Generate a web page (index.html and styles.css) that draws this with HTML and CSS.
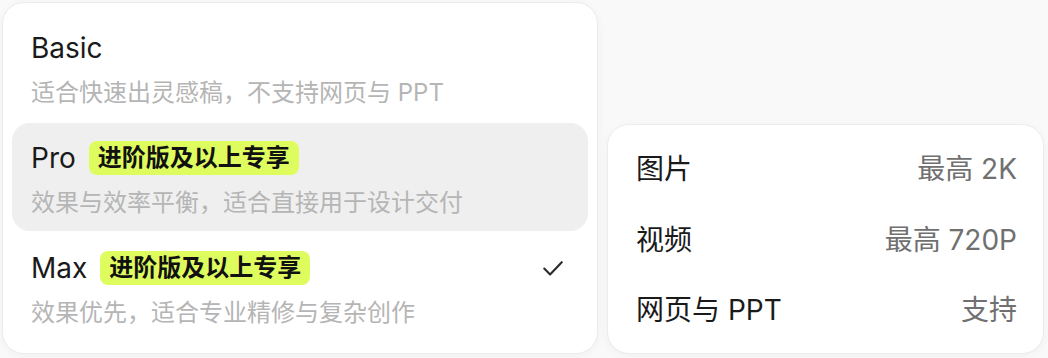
FILE: index.html
```html
<!DOCTYPE html>
<html lang="zh-CN">
<head>
    <meta charset="UTF-8">
    <meta name="viewport" content="width=device-width, initial-scale=1.0">
    <title>模式选择</title>
    <link rel="stylesheet" href="styles.css">
</head>
<body>
    <div class="stage">
        <div class="mode-menu">
            <div class="mode-item">
                <div class="mode-head">
                    <span class="mode-name">Basic</span>
                </div>
                <div class="mode-desc">适合快速出灵感稿，不支持网页与 PPT</div>
            </div>
            <div class="mode-item hovered">
                <div class="mode-head">
                    <span class="mode-name">Pro</span>
                    <span class="badge">进阶版及以上专享</span>
                </div>
                <div class="mode-desc">效果与效率平衡，适合直接用于设计交付</div>
            </div>
            <div class="mode-item selected">
                <div class="mode-head">
                    <span class="mode-name">Max</span>
                    <span class="badge">进阶版及以上专享</span>
                    <svg class="check" viewBox="0 0 24 24" width="28" height="28" fill="none" stroke="#2b2b2b" stroke-width="1.8" stroke-linecap="round" stroke-linejoin="round">
                        <path d="M4.5 12.5l5 5L19.5 7"/>
                    </svg>
                </div>
                <div class="mode-desc">效果优先，适合专业精修与复杂创作</div>
            </div>
        </div>

        <div class="spec-card">
            <div class="spec-row">
                <span class="spec-label">图片</span>
                <span class="spec-value">最高 2K</span>
            </div>
            <div class="spec-row">
                <span class="spec-label">视频</span>
                <span class="spec-value">最高 720P</span>
            </div>
            <div class="spec-row">
                <span class="spec-label">网页与 PPT</span>
                <span class="spec-value">支持</span>
            </div>
        </div>
    </div>
</body>
</html>
```

FILE: styles.css
```css
* {
    margin: 0;
    padding: 0;
    box-sizing: border-box;
}

body {
    font-family: 'Inter', 'Noto Sans CJK SC', sans-serif;
    background: #f9f9f9;
    width: 1048px;
    height: 358px;
    overflow: hidden;
    color: #1a1a1a;
}

.stage {
    display: flex;
    align-items: flex-start;
    padding: 2px 0 0 2px;
}

.mode-menu {
    width: 596px;
    height: 352px;
    background: #ffffff;
    border: 1px solid #ececec;
    border-radius: 22px;
    padding: 10px 9px;
    display: flex;
    flex-direction: column;
    gap: 2px;
    box-shadow: 0 2px 10px rgba(0, 0, 0, 0.04);
}

.mode-item {
    height: 108px;
    padding: 17px 19px 0 19px;
    border-radius: 18px;
}

.mode-item.hovered {
    background: #efefef;
}

.mode-head {
    display: flex;
    align-items: center;
    height: 36px;
}

.mode-name {
    font-size: 28px;
    line-height: 36px;
    color: #1a1a1a;
}

.badge {
    margin-left: 13px;
    height: 34px;
    padding: 0 9px;
    border-radius: 8px;
    background: #dffc5f;
    font-size: 24px;
    font-weight: 700;
    line-height: 34px;
    color: #111111;
}

.check {
    margin-left: auto;
    margin-right: 2px;
}

.mode-desc {
    margin-top: 10px;
    font-size: 24px;
    line-height: 34px;
    color: #b5b5b5;
}

.spec-card {
    margin-top: 122px;
    margin-left: 9px;
    width: 437px;
    height: 230px;
    background: #ffffff;
    border: 1px solid #ececec;
    border-radius: 22px;
    padding: 7px 26px 10px 28px;
    box-shadow: 0 2px 10px rgba(0, 0, 0, 0.04);
}

.spec-row {
    height: 70.5px;
    display: flex;
    align-items: center;
    justify-content: space-between;
    font-size: 28px;
}

.spec-label {
    color: #1a1a1a;
}

.spec-value {
    color: #707070;
}
```
